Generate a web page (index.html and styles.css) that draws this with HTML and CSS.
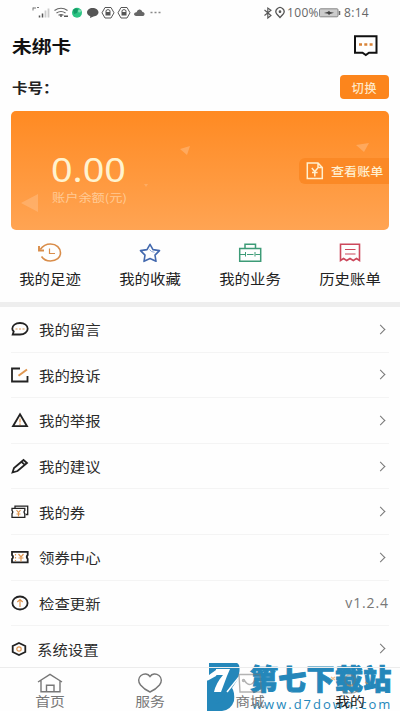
FILE: index.html
```html
<!DOCTYPE html>
<html lang="zh-CN">
<head>
<meta charset="utf-8">
<title>我的</title>
<link rel="stylesheet" href="styles.css">
</head>
<body>
<div class="app">
  <header class="status">
    <svg class="status-icons" width="132" height="18" viewBox="30 4 132 18">
      <path d="M33 7.500v3M33 8h3M37 7.500h2" stroke="#777" fill="none"/>
      <path d="M39.500 17.500v-2M42.500 17.500v-4" stroke="#555" stroke-width="1.500"/>
      <path d="M45.500 17.500v-7M48.500 17.500v-9" stroke="#ccc" stroke-width="1.800"/>
      <g fill="none" stroke="#666" stroke-width="1.200"><path d="M54.500 10.500q6.500-4.500 13 0M56.500 13q4.500-3 9 0M58.500 15.300q2.500-1.500 5 0"/></g>
      <path d="M60 16h2M64 16.300h4" stroke="#555" stroke-width="1.600"/>
      <circle cx="77" cy="12.800" r="5" fill="#2bc483"/><path d="M73 10q3-3 5-1l-1 4-3 1z" fill="#159b66"/><circle cx="79.500" cy="11" r="1.500" fill="#7fe0b4"/>
      <path d="M92.500 8c3.500 0 6 2 6 4.300s-2.500 4.200-5 4.200L90 18l.3-1.800C88 15.500 87 14 87 12.300 87 10 89.500 8 92.500 8z" fill="#555"/>
      <g fill="none" stroke="#555"><path d="M105 7.500h6l3 5.300-3 5.200h-6l-3-5.200zM121 7.500h6l3 5.300-3 5.200h-6l-3-5.200z"/><path d="M106 12v-1.500q2-2 4 0V12M122 12v-1.500q2-2 4 0V12"/></g>
      <path d="M105.500 12h5v3.500h-5zM121.500 12h5v3.500h-5z" fill="#555"/>
      <path d="M136 16q-3-1-1.500-3 1-1 2-.8Q137.500 9 140 9.500q2 .5 2.500 2.500 2.500.5 2 2.500-.2 1-1.500 1.500z" fill="#666"/>
      <path d="M150.500 12.500h2M154.500 12.500h2M158.500 12.500h2" stroke="#888" stroke-width="1.500"/>
    </svg>
    <div class="status-right">
      <svg width="22" height="14" viewBox="262 6 22 14" fill="none" stroke="#555" stroke-width="1.100"><path d="M263.500 10l6.500 5.500-3.200 2.500V8l3.200 2.300-6.500 5.200"/><path d="M279 17.500l-3-3.200a4 4 0 1 1 6 0z" stroke-width="1.300"/><circle cx="279" cy="11.700" r=".8" fill="#555"/></svg>
      <span class="status-text pct">100%</span>
      <svg class="battery" width="23" height="10" viewBox="0 0 23 10"><rect x=".5" y=".8" width="18.500" height="8" rx="1" fill="#ccc" stroke="#888"/><path d="M20.500 3v4" stroke="#666" stroke-width="1.500"/><path d="M5 5l4-1.300 1-1 1 1.300 4 .8-4 1.300-1 1.200-1-1.500z" fill="#444"/></svg>
      <span class="status-text">8:14</span>
    </div>
  </header>

  <div class="title-row">
    <h1>未绑卡</h1>
    <svg width="26" height="22" viewBox="0 0 26 22"><path d="M2 1.200h21.500v16.500H16L12.800 20 9.500 17.700H2z" fill="#fff" stroke="#111" stroke-width="2"/><path d="M6 9.500h3M11.300 9.500h3M16.600 9.500h3" stroke="#d98438" stroke-width="2.600"/></svg>
  </div>
  <div class="card-row">
    <h2>卡号：</h2>
    <button class="switch">切换</button>
  </div>

  <section class="balance">
    <svg class="confetti" width="378" height="119" viewBox="0 0 378 119"><path d="M10 92l17-9v18z" fill="#ffb878"/><path d="M169 38l10-3-3 9zM345 34l13-2-5 9z" fill="#ffb675"/><path d="M133 73l4 0-2 3z" fill="#ffb675"/></svg>
    <div class="balance-info">
      <div class="amount">0.00</div>
      <div class="amount-label">账户余额(元)</div>
    </div>
    <div class="bill">
      <svg width="18" height="18" viewBox="0 0 18 18" fill="none" stroke="#fff0cf" stroke-width="1.500"><path d="M12 1H1.300v15.500h15V5.500zM12 1v4.500h4"/><path d="M5.800 6l3 3.500L11.800 6M8.800 9.500v5M6 10.500h5.600" /></svg>
      <span>查看账单</span>
    </div>
  </section>

  <nav class="shortcuts">
    <a><svg width="24" height="20" viewBox="0 0 24 20" fill="none" stroke="#d98d4a" stroke-width="1.600"><path d="M2.300 6.500C5 2.500 8.500 1 12.500 1c6 0 10 4 10 8.800S18.500 18 12.500 18c-4 0-7-1.500-9-4.500"/><path d="M1 3v4.500h5" stroke-width="1.900"/><path d="M11.500 5.500v5h5.500" stroke-width="1.200"/></svg><span>我的足迹</span></a>
    <a><svg width="24" height="20" viewBox="0 0 24 20" fill="none" stroke="#4369ae" stroke-width="1.600" stroke-linejoin="round"><path d="M12 1.300l3 5.300 6.500 1-4.500 4.500 1 6.200-6-2.700-6 2.700 1-6.200-4.500-4.500 6.500-1z"/><path d="M11.500 6.500l2 2 3 .8" stroke="#8ea8d8" stroke-width="1"/></svg><span>我的收藏</span></a>
    <a><svg width="24" height="20" viewBox="0 0 24 20" fill="none" stroke="#3d9b77" stroke-width="1.500"><path d="M1.700 5.500h21v12.700h-21zM7 5.500V1.300h10.500v4.200"/><path d="M2 11.500h5M9 11.500h6.500M17.500 11.500h5M7.500 9v4.500M17 9v4.500" stroke-width="1"/></svg><span>我的业务</span></a>
    <a><svg width="24" height="20" viewBox="0 0 24 20" fill="none" stroke="#cc475b" stroke-width="1.600"><path d="M2.500 17.500V1.300h19v16.200l-3-2-3.200 2-3.300-2-3.300 2-3.200-2z"/><path d="M7 6.500h10.500M7 11h10.500" stroke-width="1.200"/></svg><span>历史账单</span></a>
  </nav>

  <main class="menu">
    <a class="item"><svg class="ico" viewBox="0 0 18 18"><path d="M9 3c4.500 0 7.700 2.500 7.700 5.700S13.500 14.500 9 14.500H1.700l1-3C1.700 10.500 1.300 9.800 1.300 8.700 1.300 5.500 4.500 3 9 3z"/><path class="o" d="M4.500 9h2M8 9h2M11.500 9h2" stroke-width="2"/></svg><span class="label">我的留言</span><i class="arrow"></i></a>
    <a class="item"><svg class="ico" viewBox="0 0 18 18"><path d="M9 2.500H1v13h15.500V10"/><path class="o thick" d="M7.500 9.800L16 3.500"/></svg><span class="label">我的投诉</span><i class="arrow"></i></a>
    <a class="item"><svg class="ico" viewBox="0 0 18 18"><path d="M9 3.200l7 12H2z"/><path class="o" d="M9 7.500v4M9 12.500v1.500"/></svg><span class="label">我的举报</span><i class="arrow"></i></a>
    <a class="item"><svg class="ico" viewBox="0 0 18 18"><path d="M1.500 15.500l1.500-4.500L12.500 3l3.500 3-9.500 8zM10.500 4.800l3.300 3"/></svg><span class="label">我的建议</span><i class="arrow"></i></a>
    <a class="item"><svg class="ico thin" viewBox="0 0 18 18"><path d="M4 5V3.200h12.700v8.300h-2"/><path d="M1 5.300h12.800v2.200q-1.500 1.500 0 3.200v3.600H1v-3.600q1.500-1.700 0-3.200z"/><path class="o" d="M5.500 7l2 2.500 2-2.500M7.500 9.500v4M5.500 11h4"/></svg><span class="label">我的券</span><i class="arrow"></i></a>
    <a class="item"><svg class="ico" viewBox="0 0 18 18"><path d="M1 3.800h15.700V7q-2 2 0 4v3.300H1V11q2-2 0-4z"/><path class="o" d="M7.500 6l2.500 3 2.500-3M10 9v4.500M7.500 10h5M4.500 6v1.500M4.500 9v1.500M4.500 12v1"/></svg><span class="label">领券中心</span><i class="arrow"></i></a>
    <a class="item"><svg class="ico" viewBox="0 0 18 18"><ellipse cx="9" cy="9" rx="7.600" ry="6.500"/><path class="o" d="M9 13V5.500M6.300 8L9 5.500 11.700 8"/></svg><span class="label">检查更新</span><span class="version">v1.2.4</span></a>
    <a class="item last"><svg class="ico" viewBox="0 0 18 18"><path d="M8 3l6.300 3v6L8 15l-6.300-3V6z"/><circle class="o" cx="8" cy="9" r="2.200"/></svg><span class="label">系统设置</span><i class="arrow"></i></a>
  </main>

  <div class="mark">
    <svg class="mark-logo" width="36" height="48" viewBox="0 0 36 48">
      <path d="M2 0H30Q33 1 32.500 8L31 16L25 25Q28 29 27 38Q24 47 15 48H0V17L9 12V7L2 12z" fill="#2487ba"/>
      <path d="M9 6H23L20 13L14 29H7Q9 20 16 12H9z" fill="#fff"/>
      <path d="M0 17L9 12" stroke="#fff" stroke-width="2"/>
      <path d="M32 14L20 29" stroke="#fff" stroke-width="1.500"/>
      <path d="M8 29V39Q15 39 17 32" fill="none" stroke="#2487ba" stroke-width="3"/>
    </svg>
    <div class="mark-name">第七下载站</div>
    <div class="mark-url">www.d7down.com</div>
  </div>

  <footer class="tabs">
    <a><svg width="26" height="20" viewBox="0 0 26 20"><path d="M1 9L13 1.300 25 9M4 7.500v11.200h19V7.500M9.500 18.500v-6.300H17v6.300"/></svg><span>首页</span></a>
    <a><svg width="26" height="20" viewBox="0 0 26 20"><path d="M13 3.500C15 .5 19 .2 22 2.500c3 2.500 3 6.500.5 9.500-2.500 3-6 5.500-9.500 7-3.500-1.500-7-4-9.500-7C1 9 1 5 4 2.500 7 .2 11 .5 13 3.500z"/></svg><span>服务</span></a>
    <a><svg class="under" width="26" height="20" viewBox="0 0 26 20"><path d="M2 1.500h21l1.500 17.500H3zM7 7q6 9 11 0"/><circle cx="6.500" cy="7.500" r="1"/></svg><span>商城</span></a>
    <a class="active"><svg class="under" width="26" height="20" viewBox="0 0 26 20"><path d="M5 17q2 3 8 3t8-3M13 2q5 0 5 5t-5 5-5-5 5-5z"/><path class="spark" d="M-6 4l4 3m0-3l-4 3M10 12q3 2 6 0M28 9l3 2"/></svg><span>我的</span></a>
  </footer>
</div>
</body>
</html>
```
FILE: styles.css
```css
* { box-sizing: border-box; }
body {
  margin: 0;
  background: #fff;
  color: #222;
  font-family: "Noto Sans CJK SC", sans-serif;
}
.app {
  position: relative;
  width: 400px;
  height: 711px;
  overflow: hidden;
  background: #fefefe;
}
svg { display: block; flex: none; overflow: visible; }
h1, h2 { margin: 0; transform-origin: left center; }

.status {
  display: flex;
  justify-content: space-between;
  height: 26px;
  padding: 4px 31px 0 30px;
}
.status-right { display: flex; align-items: center; height: 18px; }
.status-text {
  font: 12px/18px "Open Sans", sans-serif;
  letter-spacing: .3px;
  color: #666;
}
.pct { width: 32px; margin-left: 2px; }
.battery { margin-right: 2px; }

.title-row {
  display: flex;
  justify-content: space-between;
  align-items: center;
  height: 40px;
  padding: 0 21px 0 12px;
}
h1 { font-size: 17px; line-height: 24px; font-weight: 700; color: #111; transform: scaleX(1.16); }
.card-row {
  display: flex;
  justify-content: space-between;
  align-items: center;
  height: 45px;
  padding: 0 11px 3px 12px;
}
h2 { font-size: 13.500px; line-height: 20px; font-weight: 700; color: #222; transform: scaleX(1.15); }
.switch {
  width: 49px;
  height: 24px;
  padding: 1px 0 0;
  border: 0;
  border-radius: 4px;
  background: #fc851c;
  color: #ffe8c8;
  font: 500 12px/22px "Noto Sans CJK SC", sans-serif;
  letter-spacing: .7px;
}

.balance {
  position: relative;
  display: flex;
  justify-content: space-between;
  height: 119px;
  margin: 0 11px;
  border-radius: 5px;
  overflow: hidden;
  background: linear-gradient(#ff8a22, #ffa453);
}
.confetti { position: absolute; inset: 0; opacity: .65; }
.balance-info { padding: 38px 0 0 40px; }
.amount {
  font: 32px/42px "Noto Sans", sans-serif;
  color: #fff3cf;
  transform: scaleX(1.18);
  transform-origin: left;
  white-space: nowrap;
}
.amount-label {
  font-size: 11px;
  line-height: 16px;
  color: #ffca94;
  transform: scaleX(1.2);
  transform-origin: left;
  margin-top: -2px;
  margin-left: 1px;
}
.bill {
  display: flex;
  align-items: center;
  gap: 7px;
  width: 90px;
  height: 26px;
  margin-top: 47px;
  padding: 0 0 1px 7px;
  border-radius: 6px 0 0 6px;
  background: #fb8926;
  color: #ffefcf;
  font-size: 11.500px;
  font-weight: 500;
}
.bill span { transform: scaleX(1.14); transform-origin: left; white-space: nowrap; }

.shortcuts { display: grid; grid-template-columns: repeat(4, 1fr); height: 72px; padding-top: 13px; }
.shortcuts a { display: flex; flex-direction: column; align-items: center; gap: 6px; }
.shortcuts span { font-size: 13.500px; line-height: 18px; color: #222; transform: scaleX(1.14); }

.menu { border-top: 5px solid #eee; }
.item {
  display: flex;
  align-items: center;
  height: 45.600px;
  margin: 0 11px;
  border-bottom: 1px solid #f4f4f4;
}
.item.last { border-bottom: 0; }
.ico { width: 18px; height: 18px; fill: none; stroke: #222; stroke-width: 1.800; }
.ico.thin { stroke-width: 1.300; }
.ico .o { stroke: #df9650; stroke-width: 1.200; }
.ico .thick { stroke-width: 2; }
.label {
  margin-left: 10px;
  flex: 1;
  font-size: 13.500px;
  line-height: 20px;
  color: #2b2b2b;
  transform: scaleX(1.14);
  transform-origin: left;
}
.last .label { margin-left: 8px; }
.arrow {
  width: 7px;
  height: 7px;
  margin-right: 5px;
  border: solid #777;
  border-width: 1.500px 1.500px 0 0;
  transform: rotate(45deg);
}
.version { font: 14px/20px "Open Sans", sans-serif; letter-spacing: .9px; color: #777; }

.tabs {
  position: absolute;
  left: 0;
  right: 0;
  bottom: 0;
  display: grid;
  grid-template-columns: repeat(4, 1fr);
  height: 44px;
  padding-top: 5px;
  border-top: 1px solid #ececec;
}
.tabs a { display: flex; flex-direction: column; align-items: center; color: #777; }
.tabs svg { fill: none; stroke: #777; stroke-width: 1.400; }
.tabs .spark { stroke: #e9913e; }
.tabs span { font-size: 13px; line-height: 18px; margin-top: -1px; transform: scaleX(1.14); }
.tabs .active { color: #222; }
.tabs .under { opacity: .55; }

.mark { position: absolute; left: 207px; top: 663px; color: #2487ba; }
.mark-logo { position: absolute; left: 0; top: 0; }
.mark-name {
  position: absolute;
  left: 43px;
  top: 0;
  font-size: 28px;
  line-height: 30px;
  font-weight: 900;
  letter-spacing: .3px;
  white-space: nowrap;
  -webkit-text-stroke: 1px #2487ba;
}
.mark-url {
  position: absolute;
  left: 45px;
  top: 33px;
  font: 13px/16px "Open Sans", sans-serif;
  letter-spacing: 2px;
  white-space: nowrap;
}
```
